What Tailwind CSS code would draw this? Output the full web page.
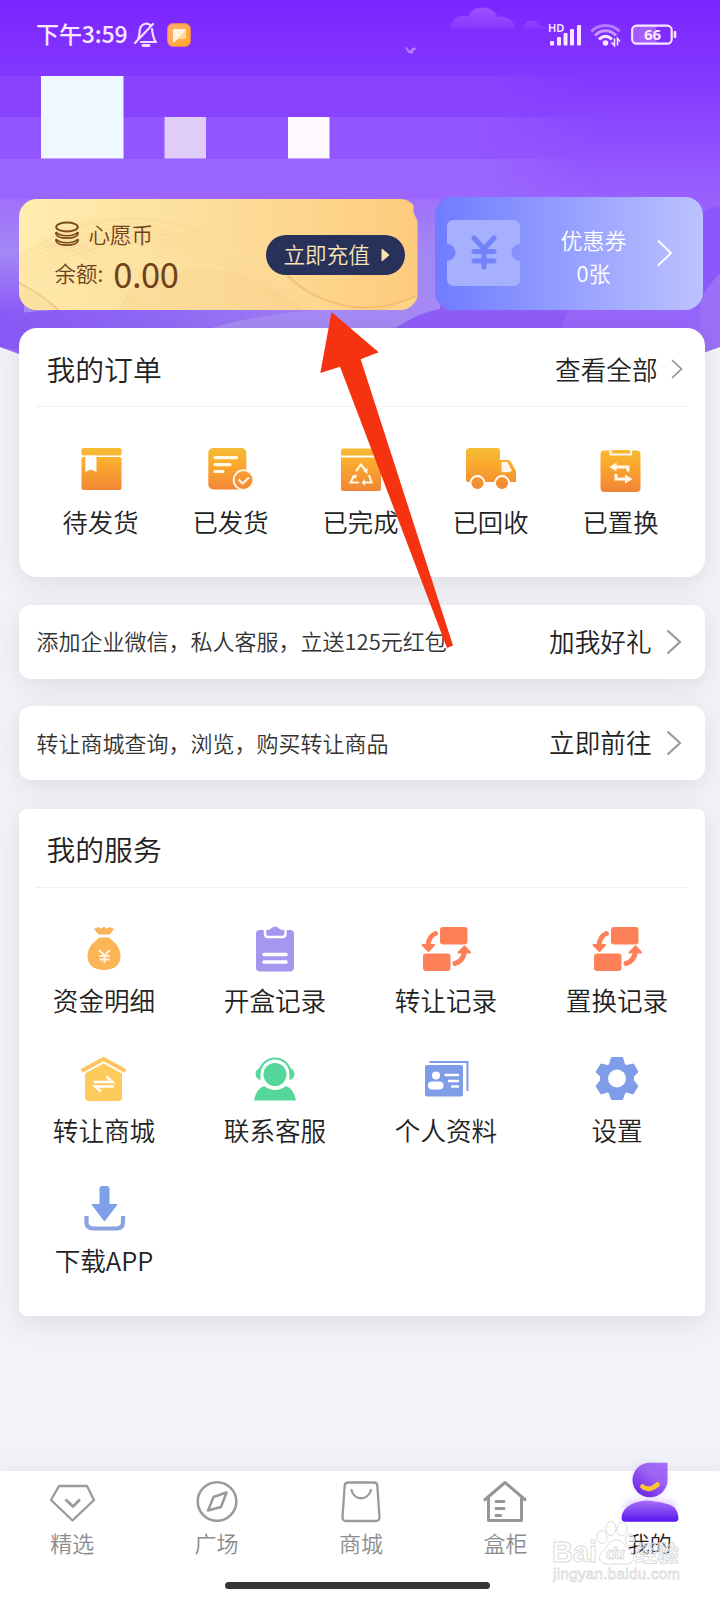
<!DOCTYPE html>
<html lang="zh-CN">
<head>
<meta charset="utf-8">
<meta name="viewport" content="width=device-width, initial-scale=1">
<title>我的</title>
<script src="https://cdn.jsdelivr.net/npm/@tailwindcss/browser@4"></script>
</head>
<body class="bg-[#f2f3f8] font-['Noto_Sans_CJK_SC',sans-serif] font-[350] text-[#222]">
<div class="relative isolate flex h-[1600px] w-[720px] flex-col overflow-hidden">

  <!-- header artwork -->
  <svg class="absolute left-0 top-0 -z-10" width="720" height="440" viewBox="0 0 720 440">
    <defs>
      <linearGradient id="sky" x1="0" y1="0" x2="0" y2="1">
        <stop offset="0" stop-color="#7a25ff"/><stop offset=".2" stop-color="#8439ff"/><stop offset=".48" stop-color="#9960fe"/><stop offset=".8" stop-color="#9162f8"/><stop offset="1" stop-color="#a57cf8"/>
      </linearGradient>
      <linearGradient id="fade" x1="0" y1="0" x2="1" y2="0">
        <stop offset=".8" stop-color="#fff"/><stop offset="1" stop-color="#000"/>
      </linearGradient>
      <linearGradient id="wave" x1="0" y1="0" x2="0" y2="1">
        <stop offset="0" stop-color="#a070fb"/><stop offset=".35" stop-color="#a385f5"/><stop offset="1" stop-color="#a68af4"/>
      </linearGradient>
      <linearGradient id="low" x1="0" y1="0" x2="0" y2="1">
        <stop offset="0" stop-color="#a58bf3"/><stop offset="1" stop-color="#8a58f6"/>
      </linearGradient>
      <linearGradient id="band" x1="0" y1="0" x2="1" y2="0">
        <stop offset="0" stop-color="#8959f6"/><stop offset=".5" stop-color="#9169f6"/><stop offset="1" stop-color="#a180f5"/>
      </linearGradient>
      <linearGradient id="cloud" x1="0" y1="0" x2="0" y2="1">
        <stop offset="0" stop-color="#9a52ff"/><stop offset="1" stop-color="#8637ff"/>
      </linearGradient>
      <mask id="m"><rect width="600" height="440" fill="url(#fade)"/></mask>
    </defs>
    <path d="M0 0H720V346Q560 410 360 410T0 347Z" fill="url(#sky)"/>
    <path d="M0 199H440V312Q412 318 390 332H0Z" fill="url(#wave)"/>
    <path d="M0 252Q12 246 24 250V316H0Z" fill="url(#low)"/>
    <path d="M0 316Q60 306 150 309H330Q250 314 200 332L30 352L0 347Z" fill="url(#band)"/>
    <path d="M392 330Q420 312 440 309H720V340H380Z" fill="#8f5df8"/>
    <path d="M570 309H704V332H562Q562 318 570 309Z" fill="#9766fa"/>
    <path d="M700 212Q710 208 720 206V346L700 354Z" fill="#8d58fb"/>
    <path d="M700 300Q712 280 720 274V347L700 354Z" fill="#9a70f8"/>
    <g mask="url(#m)">
      <rect y="76" width="600" height="41" fill="#8943fe"/>
      <rect y="117" width="600" height="42" fill="#9355ff"/>
      <rect y="159" width="600" height="40" fill="#9a66ff"/>
    </g>
    <rect x="41" y="76" width="82.500" height="82.500" fill="#f0f8ff"/>
    <rect x="164.500" y="117" width="41.500" height="41.500" fill="#e0cef8"/>
    <rect x="288" y="117" width="41.500" height="41.500" fill="#fef8ff"/>
    <path d="M451 29C451 19 459 13 468 17C472 5 491 4 498 17C508 15 515 22 515 29ZM523 29C524 20 534 17 540 26Q545 27 547 29Z" fill="url(#cloud)"/>
    <path d="M406 47.500Q408 51 410 52Q412 48.500 415.500 48.500Q412 50 412 52.500Q409 53 407.500 50.500" fill="none" stroke="#b67cff" stroke-width="1.800"/>
  </svg>

  <!-- status bar -->
  <div class="flex h-[70px] shrink-0 items-center pl-9 pr-[42px] text-[#fbe8ff]">
    <span class="-mt-[3px] text-[23px] font-medium leading-none tracking-[-0.1px]">下午3:59</span>
    <svg class="ml-[5px]" width="26" height="28" viewBox="0 0 26 28" fill="none" stroke="#f6dcff" stroke-width="2.200" stroke-linecap="round" stroke-linejoin="round">
      <path d="M2 22L20 3M5 18C7 15 6 12 7 8C8 3 14 1 17 4M19 8C20 14 20 18 23 21H8"/><path d="M10 24.500H16" stroke-width="2.800"/>
    </svg>
    <svg class="ml-[8px]" width="24" height="24" viewBox="0 0 24 24">
      <defs><linearGradient id="og" x1="0" y1="0" x2="1" y2="1"><stop offset="0" stop-color="#ffab78"/><stop offset="1" stop-color="#ffa928"/></linearGradient></defs>
      <rect x=".7" y=".7" width="22.600" height="22.600" rx="5" fill="url(#og)" stroke="#fb884e"/>
      <path d="M7 6H18Q19 6 19 7V15Q19 16 18 16H11L6 20V7Q6 6 7 6Z" fill="#fff5df"/><path d="M19 7V15Q19 16 18 16H10Z" fill="#ffd995"/>
    </svg>
    <svg class="ml-auto" width="130" height="28" viewBox="0 0 130 28">
      <text x="0" y="10.500" font-family="Noto Sans" font-size="11" font-weight="600" fill="#fbe8ff">HD</text>
      <g fill="#fbe8ff"><rect x="2" y="20" width="4" height="4.500" rx="1"/><rect x="9" y="16" width="4" height="8.500" rx="1"/><rect x="15.500" y="12" width="4" height="12.500" rx="1"/><rect x="22" y="8" width="4" height="16.500" rx="1"/><rect x="29" y="4" width="4" height="20.500" rx="1"/></g>
      <g fill="none" stroke-width="3"><path d="M43.500 10.500C51 2.500 64 2.500 71.500 10.500" stroke="#b57cff"/><path d="M47 14.500C53 8 62 8 68 14.500" stroke="#c597ff"/><path d="M51 18.500C55 14 60 14 64 18.500" stroke="#fbe8ff"/></g>
      <circle cx="57.500" cy="22" r="2.800" fill="#fbe8ff"/>
      <path d="M66.500 17.500V24.500L63.500 21.500M69.500 24.500V17.500L72 20.500" fill="none" stroke="#fbe8ff" stroke-width="1.600"/>
      <rect x="85.500" y="5" width="23" height="17" fill="#a35dff"/>
      <rect x="84.200" y="4.700" width="39.500" height="18" rx="4.500" fill="none" stroke="#fbe8ff" stroke-width="2.200"/>
      <rect x="125.700" y="10" width="2.600" height="7" rx="1" fill="#fbe8ff"/>
      <text x="104.500" y="19" text-anchor="middle" font-family="Noto Sans" font-size="15" font-weight="700" fill="#fbe8ff">66</text>
    </svg>
  </div>

  <!-- wallet and coupons -->
  <section class="mt-[127px] flex h-[113px] shrink-0 gap-[17.500px] pl-[18.500px]">
    <div class="relative mt-[2px] h-[111px] w-[399px] overflow-hidden rounded-[18px] bg-linear-to-r from-[#ffedb0] via-[#fddd9a] to-[#fdcb7d] text-[#70421b] [clip-path:polygon(0_0,99%_0,99%_12%,100%_20%,100%_100%,0_100%)]">
      <svg class="absolute inset-0 -z-0" width="399" height="111" viewBox="0 0 399 111" fill="none">
        <path d="M0 55C100 -20 200 30 280 85S370 105 399 95V111H0Z" fill="#fce09e" fill-opacity=".35"/>
        <path d="M0 82Q25 105 42 111H0ZM100 111Q110 75 170 70T285 111Z" fill="#f5c883" fill-opacity=".2"/>
        <path d="M255 60C290 110 350 120 399 96" stroke="#efb568" stroke-width="1.500" stroke-opacity=".8"/>
        <path d="M0 84C18 92 32 105 40 111" stroke="#ecb770" stroke-width="1.500" stroke-opacity=".7"/>
        <g stroke="#efc079" stroke-opacity=".22"><path d="M0 70C100 -5 190 30 300 111M3 73C100 0 187 34 295 111M5 76C100 5 185 38 290 111M8 79C100 10 182 42 285 111M10 82C100 15 180 46 280 111M0 60C100 -15 200 22 310 111M110 111C80 60 50 40 20 50M116 111C87 60 55 38 25 48M122 111C95 60 60 35 30 45"/></g>
      </svg>
      <div class="relative flex h-full items-center justify-between pl-9 pr-[13px]">
        <div class="flex h-full flex-col pt-[19px]">
          <div class="flex h-[32px] items-center gap-[10px] text-[21.500px] leading-none">
            <svg width="24" height="26" viewBox="0 0 24 26" fill="none" stroke="#7b4a20" stroke-width="2"><ellipse cx="12" cy="6" rx="10.800" ry="4.500"/><path d="M1 11V13C3 18.500 21 18.500 23 13V11M1 11C5 16 19 16 23 11M1 18V20C3 25.500 21 25.500 23 20V18M1 18C5 23 19 23 23 18" stroke-width="1.700"/></svg>
            <span>心愿币</span>
          </div>
          <div class="flex h-[46px] items-center leading-none"><span class="text-[21.500px]">余额:</span><span class="ml-[10px] text-[34.500px] font-normal tracking-[-0.500px]">0.00</span></div>
        </div>
        <div class="mt-[1px] flex h-[40px] w-[139px] items-center gap-[11px] rounded-full bg-[#27315a] pb-[3px] pl-[18px] text-[21.600px] leading-none text-[#fbe3b5]">
          <span>立即充值</span>
          <svg class="mt-[3px]" width="10" height="14" viewBox="0 0 10 14"><path d="M1 1L8 7L1 13Z" fill="#fbe3b5" stroke="#fbe3b5" stroke-linejoin="round"/></svg>
        </div>
      </div>
    </div>
    <div class="flex h-[112.500px] w-[268px] items-center rounded-[18px] bg-linear-to-r from-[#6f7cff] via-[#969fff] to-[#bcc2ff] pl-[11px] text-white">
      <svg width="75" height="68" viewBox="0 0 75 68">
        <path d="M8 1H67Q74 1 74 8V25A8.500 8.500 0 0 0 74 42V60Q74 67 67 67H8Q1 67 1 60V42A8.500 8.500 0 0 0 1 25V8Q1 1 8 1Z" fill="#a7afff"/>
        <path d="M28 19L38 30L48 19M38 30V48M28 32.500H48M28 42H48" fill="none" stroke="#7283fa" stroke-width="5" stroke-linecap="round"/>
      </svg>
      <div class="ml-[28px] flex w-[89px] flex-col items-center pt-[5px] text-[22px] leading-[33px]"><span>优惠券</span><span>0张</span></div>
      <svg class="ml-[19px]" width="16" height="28" viewBox="0 0 16 28" fill="none" stroke="#fff" stroke-width="1.800"><path d="M1 1.500L14 14L1 26.500"/></svg>
    </div>
  </section>

  <!-- orders -->
  <section class="ml-[18.500px] mt-[18px] h-[248.500px] w-[686px] shrink-0 rounded-[18px] bg-white pl-[17px] pr-[19px] shadow-[0_6px_26px_rgba(70,75,95,0.13)]">
    <div class="flex h-[79px] items-center border-b border-[#f0f0f2] pl-[11px] pr-[3px] pt-[4px] leading-none">
      <h2 class="text-[28.800px]">我的订单</h2>
      <span class="ml-auto text-[25.600px]">查看全部</span>
      <svg class="ml-[13px]" width="12" height="20" viewBox="0 0 12 20" fill="none" stroke="#8e8e8e" stroke-width="1.600"><path d="M1 1L10.500 10L1 19"/></svg>
    </div>
    <svg class="absolute" width="0" height="0"><defs><linearGradient id="o" gradientUnits="userSpaceOnUse" x1="0" y1="3" x2="0" y2="46"><stop offset="0" stop-color="#f4bc35"/><stop offset=".35" stop-color="#fbab2d"/><stop offset="1" stop-color="#f18537"/></linearGradient></defs></svg>
    <div class="grid grid-cols-5 pt-[38px] text-center text-[25.300px] leading-none">
      <div class="flex flex-col items-center gap-[14px]">
        <svg width="52" height="50" viewBox="0 0 52 50"><rect x="6.500" y="3" width="40" height="7.500" rx="2" fill="url(#o)"/><path d="M8.500 12H44.500Q46.500 12 46.500 14V43Q46.500 45 44.500 45H8.500Q6.500 45 6.500 43V14Q6.500 12 8.500 12Z" fill="url(#o)"/><path d="M10.300 10.500H21.500V27L16 24.500L10.300 27Z" fill="#fff"/></svg>
        <span>待发货</span>
      </div>
      <div class="flex flex-col items-center gap-[14px]">
        <svg width="52" height="50" viewBox="0 0 52 50"><rect x="3.300" y="3" width="38" height="41.500" rx="5" fill="url(#o)"/><path d="M10 12.700H31.500M10 19.700H25M10 26.500H18" stroke="#fffbe6" stroke-width="3.200" stroke-linecap="round"/><circle cx="38.500" cy="35" r="9.800" fill="url(#o)" stroke="#fff8e8" stroke-width="1.800"/><path d="M33.500 34.500L37.500 38.500L44 32.500" fill="none" stroke="#fff8e8" stroke-width="2.200"/></svg>
        <span>已发货</span>
      </div>
      <div class="flex flex-col items-center gap-[14px]">
        <svg width="52" height="50" viewBox="0 0 52 50"><path d="M8 3.500H45L46 9.500V10.500H6V5.500Q6 3.500 8 3.500ZM6 12.500H46V44Q46 46 44 46H8Q6 46 6 44Z" fill="url(#o)"/><g fill="none" stroke="#fff6e0" stroke-width="2.200"><path d="M21 26L26 19.500L31 26M34 30L36.500 37.500H28M24 37.500H15.500L19.500 30"/></g><path d="M28 26L32.500 23V29ZM30 34V41L26.500 37.500ZM16.500 31L22 29.500L21 34Z" fill="#fff6e0"/></svg>
        <span>已完成</span>
      </div>
      <div class="flex flex-col items-center gap-[14px]">
        <svg width="52" height="50" viewBox="0 0 52 50"><path d="M5 3H32Q35 3 35 6V15H43Q45 15 46 17L51 26V37H47.500L43 37A7.500 7.500 0 0 0 30 37H20A7.500 7.500 0 0 0 6 37H3Q1 37 1 35V7Q1 3 5 3Z" fill="url(#o)"/><path d="M36.500 17H42.500L47 26Q43 28 36.500 27Z" fill="#fff8ea"/><circle cx="12.500" cy="38" r="7" fill="url(#o)" stroke="#fff" stroke-width="1.800"/><circle cx="37" cy="38" r="7" fill="url(#o)" stroke="#fff" stroke-width="1.800"/></svg>
        <span>已回收</span>
      </div>
      <div class="flex flex-col items-center gap-[14px]">
        <svg width="52" height="50" viewBox="0 0 52 50"><rect x="5.500" y="5.500" width="40" height="41.500" rx="4" fill="url(#o)"/><path d="M15.500 4V9.500H36V4" fill="none" stroke="#fff8ea" stroke-width="2"/><rect x="18" y="5" width="16" height="3" fill="url(#o)"/><path d="M18 22H33V26.500M21 29V34H33" fill="none" stroke="#fff8ea" stroke-width="3"/><path d="M14.500 22L21.500 17.500V26.500ZM37.500 34L30 29.500V38.500Z" fill="#fff8ea"/></svg>
        <span>已置换</span>
      </div>
    </div>
  </section>

  <!-- banners -->
  <section class="ml-[18.500px] mt-[28.500px] flex h-[73.500px] w-[686px] shrink-0 items-center rounded-xl bg-white pl-[18px] pr-[23px] leading-none shadow-[0_6px_26px_rgba(70,75,95,0.13)]">
    <span class="-mt-[3px] text-[22px] text-[#333]">添加企业微信，私人客服，立送125元红包</span>
    <span class="-mt-[2px] ml-auto text-[25.600px]">加我好礼</span>
    <svg class="ml-[14px]" width="16" height="26" viewBox="0 0 16 26" fill="none" stroke="#9b9b9b" stroke-width="2.200"><path d="M1.500 1.500L14 13L1.500 24.500"/></svg>
  </section>
  <section class="ml-[18.500px] mt-[27.500px] flex h-[74px] w-[686px] shrink-0 items-center rounded-xl bg-white pl-[18px] pr-[23px] leading-none shadow-[0_6px_26px_rgba(70,75,95,0.13)]">
    <span class="-mt-[3px] text-[22px] text-[#333]">转让商城查询，浏览，购买转让商品</span>
    <span class="-mt-[2px] ml-auto text-[25.600px]">立即前往</span>
    <svg class="ml-[14px]" width="16" height="26" viewBox="0 0 16 26" fill="none" stroke="#9b9b9b" stroke-width="2.200"><path d="M1.500 1.500L14 13L1.500 24.500"/></svg>
  </section>

  <!-- services -->
  <section class="ml-[18.500px] mt-[29px] h-[507px] w-[686px] shrink-0 rounded-lg bg-white shadow-[0_6px_26px_rgba(70,75,95,0.13)]">
    <div class="ml-[17px] mr-[19px] flex h-[79px] items-center border-b border-[#f0f0f2] pl-[11px] pt-[2px] leading-none"><h2 class="text-[28.800px]">我的服务</h2></div>
    <div class="grid auto-rows-[130px] grid-cols-4 pr-[2px] pt-[37px] text-center text-[25.600px] leading-none">
      <div class="flex flex-col items-center gap-[12px]">
        <svg width="52" height="50" viewBox="0 0 52 50"><path d="M16 4L20 2L23 3.500L26 2L29 3.500L32 2L36 4L32 9.500H20.500Z" fill="#fbb35a"/><path d="M21.500 12.500H31L38 19Q42.500 25 42.500 31C42.500 40 36 45 26 45S9.500 40 9.500 31Q9.500 25 14 19Z" fill="#fbb557"/><path d="M21 25L26.500 30.500L32 25M26.500 30.500V38M21.500 31H31.500M21.500 34.500H31.500" fill="none" stroke="#fff3df" stroke-width="1.900"/></svg>
        <span>资金明细</span>
      </div>
      <div class="flex flex-col items-center gap-[12px]">
        <svg width="52" height="50" viewBox="0 0 52 50"><rect x="7" y="5" width="38" height="41.500" rx="4" fill="#a796f0"/><path d="M16 4V9Q16 12 19 12H33.500Q36.500 12 36.500 9V4" fill="none" stroke="#fff" stroke-width="2.400"/><path d="M18 5Q21 5 22 3.500Q24 1.500 26 1.500T30 3.500Q31.500 5 34.500 5V8.500Q34.500 10 33 10H19.500Q18 10 18 8.500Z" fill="#a796f0"/><path d="M15 29.500H37M15 37H37" stroke="#fff" stroke-width="3.600" stroke-linecap="round"/></svg>
        <span>开盒记录</span>
      </div>
      <div class="flex flex-col items-center gap-[12px]">
        <svg width="52" height="50" viewBox="0 0 52 50" fill="#fd8059"><rect x="20" y="2" width="27.500" height="17.500" rx="3"/><rect x="3" y="28.500" width="27.500" height="17.500" rx="3"/><g fill="none" stroke="#fd8059" stroke-width="5" stroke-linecap="round"><path d="M15.500 8.500Q9 11 8 20"/><path d="M35 38.500Q43 36 44.500 27"/></g><path d="M2.500 20H14L8.500 26ZM38.500 27.500H50L44.500 21.500Z" stroke="#fd8059" stroke-width="2" stroke-linejoin="round"/></svg>
        <span>转让记录</span>
      </div>
      <div class="flex flex-col items-center gap-[12px]">
        <svg width="52" height="50" viewBox="0 0 52 50" fill="#fd8059"><rect x="20" y="2" width="27.500" height="17.500" rx="3"/><rect x="3" y="28.500" width="27.500" height="17.500" rx="3"/><g fill="none" stroke="#fd8059" stroke-width="5" stroke-linecap="round"><path d="M15.500 8.500Q9 11 8 20"/><path d="M35 38.500Q43 36 44.500 27"/></g><path d="M2.500 20H14L8.500 26ZM38.500 27.500H50L44.500 21.500Z" stroke="#fd8059" stroke-width="2" stroke-linejoin="round"/></svg>
        <span>置换记录</span>
      </div>
      <div class="flex flex-col items-center gap-[12px]">
        <svg width="52" height="50" viewBox="0 0 52 50"><path d="M3.500 16L25.500 4L47.500 16" fill="none" stroke="#fcc65b" stroke-width="4"/><path d="M7 18.500L25.500 8.500L44 18.500V42Q44 46 40 46H11Q7 46 7 42Z" fill="#fccb59"/><path d="M16 27H34.500L28.500 21.500M35.500 31.500H17L23 36.500" fill="none" stroke="#fff" stroke-width="2.400"/></svg>
        <span>转让商城</span>
      </div>
      <div class="flex flex-col items-center gap-[12px]">
        <svg width="52" height="50" viewBox="0 0 52 50"><path d="M10.500 19A15.500 15.500 0 0 1 41.500 19" fill="none" stroke="#55d79c" stroke-width="2"/><path d="M11.500 13Q7 14 6.500 19Q7 24 11.500 25ZM40.500 13Q45 14 45.500 19Q45 24 40.500 25Z" fill="#55d79c"/><circle cx="26" cy="19.500" r="11.500" fill="#55d79c"/><path d="M15 31Q26 39 37 31Q45 34 47 45.500H5Q7 34 15 31Z" fill="#55d79c"/></svg>
        <span>联系客服</span>
      </div>
      <div class="flex flex-col items-center gap-[12px]">
        <svg width="52" height="50" viewBox="0 0 52 50"><path d="M9.500 7H47.500V36" fill="none" stroke="#7e9ce6" stroke-width="2"/><rect x="5" y="10" width="38" height="31.500" rx="2" fill="#7e9ce8"/><g fill="#fff"><circle cx="16" cy="20.500" r="4"/><rect x="8" y="26.500" width="15.500" height="8" rx="4"/></g><path d="M25.500 20H38M29 26H38M32 31.500H38" stroke="#fff" stroke-width="2.500" stroke-linecap="round"/></svg>
        <span>个人资料</span>
      </div>
      <div class="flex flex-col items-center gap-[12px]">
        <svg width="52" height="50" viewBox="0 0 52 50"><path d="M20.500 2.500H31.500L33.500 9.500L35.500 10.500L42.500 9L47 17L42.500 21.500V25.500L47 31L42 39L35.500 37L33.500 38.500L31.500 44.500H20.500L18.500 38.500L16.500 37L10 39L5 31L9.500 25.500V21.500L5 17L10 9L16.500 10.500L18.500 9.500Z" fill="#7e9ce8" stroke="#7e9ce8" stroke-linejoin="round"/><circle cx="26" cy="23.500" r="9" fill="#fff"/></svg>
        <span>设置</span>
      </div>
      <div class="flex flex-col items-center gap-[12px]">
        <svg width="52" height="50" viewBox="0 0 52 50"><path d="M24 1.500H29Q31 1.500 31 3.500V19.500H39L26.500 36L14 19.500H22V3.500Q22 1.500 24 1.500Z" fill="#7da0e9" stroke="#7da0e9" stroke-linejoin="round"/><path d="M8.500 31V37Q8.500 43.500 15 43.500H38.500Q45 43.500 45 37V31" fill="none" stroke="#8ba4e0" stroke-width="4.200"/></svg>
        <span>下载APP</span>
      </div>
    </div>
  </section>

  <!-- tab bar -->
  <nav class="mt-auto flex h-[129px] w-[722px] shrink-0 flex-col bg-white shadow-[0_-3px_16px_rgba(120,130,150,0.10)]">
    <div class="grid grid-cols-5 pt-[6px] text-[22px] leading-none text-[#8c8c8c]">
      <div class="flex flex-col items-center gap-[4px]">
        <svg width="50" height="50" viewBox="0 0 50 50" fill="none" stroke="#9a9a9a" stroke-width="2.300" stroke-linejoin="round"><path d="M12 9H40L47 23L25.500 43.500L4 23Z"/><path d="M18.500 22.500L26 29.500L33 22.500" stroke-width="2.800"/></svg>
        <span>精选</span>
      </div>
      <div class="flex flex-col items-center gap-[4px]">
        <svg width="50" height="50" viewBox="0 0 50 50" fill="none" stroke="#9a9a9a" stroke-width="2.500" stroke-linejoin="round"><circle cx="25" cy="24.500" r="19.300"/><path d="M34.500 15.500L29 30L16 33.500L21.500 20Z"/></svg>
        <span>广场</span>
      </div>
      <div class="flex flex-col items-center gap-[4px]">
        <svg width="50" height="50" viewBox="0 0 50 50" fill="none" stroke="#9a9a9a" stroke-width="2.300" stroke-linecap="round"><path d="M12 5.500H38Q41 5.500 41.300 8.500L43.500 40Q43.500 44 40 44H10Q6.500 44 6.500 40L8.700 8.500Q9 5.500 12 5.500Z"/><path d="M15.500 13C18 24 32 24 35 13"/></svg>
        <span>商城</span>
      </div>
      <div class="flex flex-col items-center gap-[4px]">
        <svg width="50" height="50" viewBox="0 0 50 50" fill="none" stroke="#969696" stroke-width="3" stroke-linejoin="round"><path d="M4 23.500L25 5.500L46 23.500M8.500 21V43.500H41.500V21"/><path d="M16 24.500H24M16 31.500H24M16 38.500H20.500" stroke-linecap="round"/></svg>
        <span>盒柜</span>
      </div>
      <div class="flex flex-col items-center text-[#222]">
        <svg class="-mt-[23px] mb-[8px]" width="62" height="69" viewBox="0 0 62 69">
          <defs>
            <linearGradient id="hd" x1="1" y1="0" x2=".3" y2="1"><stop offset="0" stop-color="#a56dfa"/><stop offset=".45" stop-color="#9c63f3"/><stop offset="1" stop-color="#6c26e8"/></linearGradient>
            <linearGradient id="bd" x1="0" y1="0" x2="0" y2="1"><stop offset="0" stop-color="#a970f7"/><stop offset="1" stop-color="#5716f0"/></linearGradient>
            <filter id="gl" x="-30%" y="-30%" width="160%" height="160%"><feGaussianBlur stdDeviation="3"/></filter>
          </defs>
          <g fill="#b98aff" opacity=".35" filter="url(#gl)"><circle cx="31" cy="26" r="17"/><rect x="4" y="46" width="54" height="18" rx="9"/></g>
          <path d="M31 8.700H48.500V26A17.500 17.300 0 1 1 31 8.700Z" fill="url(#hd)"/>
          <path d="M23.500 32.500Q30 38 38.500 30.500" fill="none" stroke="#fcc72c" stroke-width="4.800" stroke-linecap="round"/>
          <path d="M2.500 64Q3 55 12 50.500T31 46.700T50 50.500T59.500 64Q59.500 67.700 56 67.700H6Q2.500 67.700 2.500 64Z" fill="url(#bd)"/>
        </svg>
        <span>我的</span>
      </div>
    </div>
    <div class="mb-[11.500px] ml-[225px] mt-auto h-[7px] w-[265px] rounded-full bg-[#363636]"></div>
  </nav>

  <!-- watermark -->
  <svg class="absolute left-[546px] top-[1515px]" width="150" height="72" viewBox="0 0 150 72" fill="#fff" fill-opacity=".65" stroke="#dcdcdc" stroke-width="1">
    <text x="6" y="47" font-family="Liberation Sans" font-weight="700" font-size="29" textLength="45">Bai</text>
    <ellipse cx="56" cy="22" rx="5" ry="6.500"/><ellipse cx="65" cy="13.500" rx="5" ry="7"/><ellipse cx="76" cy="14" rx="5" ry="7"/><ellipse cx="84" cy="25" rx="4.500" ry="6"/>
    <path d="M70 25C77 25 79 31 84 36C91 42 88 49 80 49H61C53 49 51 41 57 36C62 31 64 25 70 25Z"/>
    <text x="60" y="44" font-family="Liberation Sans" font-style="italic" font-weight="700" font-size="17" textLength="19">du</text>
    <text x="89" y="46" font-family="Noto Sans CJK SC" font-weight="700" font-size="22" fill-opacity=".1">经验</text>
    <text x="7" y="63.500" font-family="Liberation Sans" font-size="15" textLength="127" stroke-width=".8">jingyan.baidu.com</text>
  </svg>

  <!-- pointer to the recharge button -->
  <svg class="absolute left-[310px] top-[305px]" width="160" height="350" viewBox="310 305 160 350"><path d="M331.500 312L378.700 352.300L360.700 359.300L453 645.500L447 648L340 366.700L320.300 373Z" fill="#f63310"/></svg>
</div>
</body>
</html>
